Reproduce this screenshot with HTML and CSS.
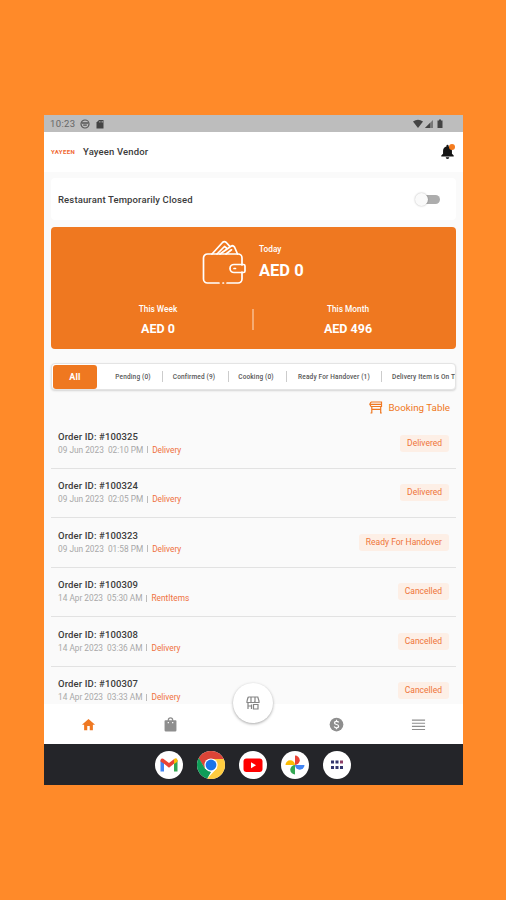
FILE: index.html
```html
<!DOCTYPE html>
<html lang="en">
<head>
  <meta charset="UTF-8">
  <meta name="viewport" content="width=device-width, initial-scale=1.0">
  <title>Yayeen Vendor</title>
  <link rel="stylesheet" href="styles.css">
</head>
<body>
  <div class="device">
    <div class="status-bar">
      <span class="time">10:23</span>
      <svg class="status-face" viewBox="0 0 10 10"><circle cx="5" cy="5" r="4" fill="none" stroke="#555" stroke-width="1.2"/><path d="M2 4h6M3.2 6.2h3.6" stroke="#555" stroke-width="1.3"/></svg>
      <svg class="status-card" viewBox="0 0 8 10"><path d="M3 1h4.5v8.5h-7V3.5z" fill="#444"/><path d="M3.4 2v1.6M5 2v1.6M6.5 2v1.6" stroke="#bdbdbd" stroke-width=".6"/></svg>
      <svg class="status-right" viewBox="0 0 32 10"><path d="M0 2.6Q5-1.2 10 2.6L5 9z" fill="#444"/><path d="M12 9l8-8v8z" fill="#777"/><path d="M12 9l5-5v5z" fill="#444"/><path d="M24.500 1.500h1.500V.5h2v1h1.500V9h-5z" fill="#444"/></svg>
    </div>

    <header class="app-bar">
      <span class="logo">YAYEEN</span>
      <h1>Yayeen Vendor</h1>
      <div class="bell">
        <svg viewBox="0 0 16 18"><path d="M8 17a2 2 0 0 0 2-2H6a2 2 0 0 0 2 2zM13 11V7.500C13 5 11.500 3.200 9.200 2.700V2a1.200 1.200 0 0 0-2.400 0v.7C4.500 3.200 3 5 3 7.500V11l-2 2v1h14v-1z" fill="#151515"/></svg>
        <span class="bell-dot"></span>
      </div>
    </header>

    <main>
      <section class="closed-card">
        <span>Restaurant Temporarily Closed</span>
        <span class="switch"><span class="knob"></span></span>
      </section>

      <section class="earnings">
        <div class="today">
          <svg class="wallet" viewBox="0 0 44 45" fill="none" stroke="#fff" stroke-width="1.700" stroke-linecap="round" stroke-linejoin="round">
            <path d="M17 43H5.500a4 4 0 0 1-4-4V18a4 4 0 0 1 4-4H36a4 4 0 0 1 4 4v7M40 32v7a4 4 0 0 1-4 4H25M21 43h.5"/>
            <path d="M41.500 24.500H32a4 4 0 0 0 0 8H41.500q1.500 0 1.500-1.500V26q0-1.500-1.500-1.500zM32 28.500h1.500"/>
            <path d="M10 14L20.500 2.500q1.800-1.600 3.800 0l3.500 3.800M15 14l7.500-7.500 2.500 2M18 14l11-7.800q2-1.200 3.500.8L35.500 14M24 14l5.500-4.200"/>
          </svg>
          <div class="today-text">
            <span class="label">Today</span>
            <span class="amount amount-lg">AED 0</span>
          </div>
        </div>
        <div class="periods">
          <div class="period">
            <span class="label">This Week</span>
            <span class="amount">AED 0</span>
          </div>
          <div class="split"></div>
          <div class="period">
            <span class="label">This Month</span>
            <span class="amount">AED 496</span>
          </div>
        </div>
      </section>

      <nav class="tabs">
        <span class="tab active">All</span>
        <span class="tab t-pending">Pending (0)</span>
        <span class="tab t-confirmed">Confirmed (9)</span>
        <span class="tab t-cooking">Cooking (0)</span>
        <span class="tab t-ready">Ready For Handover (1)</span>
        <span class="tab t-way">Delivery Item Is On The Way</span>
      </nav>

      <div class="booking">
        <svg viewBox="0 0 14 13" fill="none" stroke="#ef7822" stroke-width="1.200"><path d="M2 1h10.500v4.500H2L.8 3.300 2 1M1.500 3.300h11M2.800 5.500V12M11.700 5.500V12M2.800 8.300h8.900M1.500 12h1.800M11 12h1.800"/></svg>
        <span>Booking Table</span>
      </div>

      <ul class="orders">
        <li class="order">
          <div>
            <p class="order-id">Order ID: #100325</p>
            <p class="order-meta"><span class="date">09 Jun 2023&nbsp; 02:10 PM</span><i></i><b>Delivery</b></p>
          </div>
          <span class="badge">Delivered</span>
        </li>
        <li class="order">
          <div>
            <p class="order-id">Order ID: #100324</p>
            <p class="order-meta"><span class="date">09 Jun 2023&nbsp; 02:05 PM</span><i></i><b>Delivery</b></p>
          </div>
          <span class="badge">Delivered</span>
        </li>
        <li class="order">
          <div>
            <p class="order-id">Order ID: #100323</p>
            <p class="order-meta"><span class="date">09 Jun 2023&nbsp; 01:58 PM</span><i></i><b>Delivery</b></p>
          </div>
          <span class="badge">Ready For Handover</span>
        </li>
        <li class="order">
          <div>
            <p class="order-id">Order ID: #100309</p>
            <p class="order-meta"><span class="date">14 Apr 2023&nbsp; 05:30 AM</span><i></i><b>RentItems</b></p>
          </div>
          <span class="badge">Cancelled</span>
        </li>
        <li class="order">
          <div>
            <p class="order-id">Order ID: #100308</p>
            <p class="order-meta"><span class="date">14 Apr 2023&nbsp; 03:36 AM</span><i></i><b>Delivery</b></p>
          </div>
          <span class="badge">Cancelled</span>
        </li>
        <li class="order">
          <div>
            <p class="order-id">Order ID: #100307</p>
            <p class="order-meta"><span class="date">14 Apr 2023&nbsp; 03:33 AM</span><i></i><b>Delivery</b></p>
          </div>
          <span class="badge">Cancelled</span>
        </li>
      </ul>
    </main>

    <nav class="bottom-nav">
      <span class="nav-item"><svg viewBox="0 0 24 24" fill="#ef7822"><path d="M10 21v-6.500h4V21h5v-8.500h3.500L12 3 1.500 12.500H5V21z"/></svg></span>
      <span class="nav-item"><svg viewBox="0 0 24 24" fill="#8e8e8e"><path fill-rule="evenodd" d="M20 5h-3.500a4.500 4.500 0 0 0-9 0H4a1.500 1.500 0 0 0-1.500 1.500V21A2 2 0 0 0 4.500 23h15a2 2 0 0 0 2-2V6.500A1.500 1.500 0 0 0 20 5zM12 2.500A2.500 2.500 0 0 1 14.500 5h-5A2.500 2.500 0 0 1 12 2.500zM7.500 8h2v2h-2zM14.500 8h2v2h-2z"/></svg></span>
      <span class="nav-item"></span>
      <span class="nav-item"><svg viewBox="0 0 24 24" fill="#8e8e8e"><path d="M12 1a11 11 0 1 0 0 22 11 11 0 0 0 0-22z"/><path d="M15.500 8.500Q14.500 6.800 12 6.800q-3.200 0-3.200 2.400T12 12t3.300 2.700-3.300 2.500q-2.600 0-3.600-1.900M12 4.500v2.500M12 17v2.500" fill="none" stroke="#fff" stroke-width="2"/></svg></span>
      <span class="nav-item"><svg viewBox="0 0 24 24" fill="none" stroke="#8e8e8e" stroke-width="1.800"><path d="M1.500 5h21M1.500 10h21M1.500 15h21M1.500 20h21"/></svg></span>
      <div class="fab">
        <svg viewBox="0 0 14 14" fill="none" stroke="#858585" stroke-width="1.200"><path d="M2.200 1h9.600L13 5v1.500H8.800V5M1 5l1.200-4M1 5v1.500h4V5M5 1v5.500h4V1M2 6.500V13M2 10h3.500M5.500 13V8.500M7.500 8.500h4.500V13H7.500z"/></svg>
      </div>
    </nav>

    <div class="dock">
      <span class="app"><svg viewBox="0 0 28 28"><path d="M5.500 20.500V9l3.500 2.200v9.300z" fill="#4285f4"/><path d="M22.500 20.500V9L19 11.200v9.300z" fill="#34a853"/><path d="M5.500 9.700q0-3 2.800-2L14 12l5.200-4v4.600L14 16.800l-5.200-4.200L5.500 10.500z" fill="#ea4335"/><path d="M19 8q3-2 3.500 1.200v1.500L19 13z" fill="#fbbc04"/></svg></span>
      <span class="app"><svg viewBox="0 0 28 28"><path d="M0 0h28v8H14L8 17.500 0 5z" fill="#db4437"/><path d="M1.500 6.500L8 17.500l6 3.500-4 7H0V6z" fill="#0f9d58"/><path d="M14 8h14v20H10l10-11z" fill="#ffcd40"/><circle cx="14" cy="14" r="6.600" fill="#fff"/><circle cx="14" cy="14" r="5.400" fill="#1a73e8"/></svg></span>
      <span class="app"><svg viewBox="0 0 28 28"><rect x="4.500" y="7.500" width="19" height="13.500" rx="3" fill="#f00"/><path d="M12 11.300v6l5-3z" fill="#fff"/></svg></span>
      <span class="app"><svg viewBox="0 0 28 28"><path d="M14 14V4.500a4.700 4.700 0 0 1 0 9.500z" fill="#ea4335"/><path d="M14 14h9.500a4.700 4.700 0 0 1-9.500 0z" fill="#4285f4"/><path d="M14 14v9.500a4.700 4.700 0 0 1 0-9.500z" fill="#34a853"/><path d="M14 14H4.500a4.700 4.700 0 0 1 9.500 0z" fill="#fbbc04"/></svg></span>
      <span class="app"><svg viewBox="0 0 28 28" fill="#33366e"><path d="M8 9.500h3v3H8zM12.500 9.500h3v3h-3zM8 15h3v3H8zM12.500 15h3v3h-3zM17 15h3v3h-3z"/><path d="M17 9.500h3v3h-3z" fill="#8d3f68"/></svg></span>
    </div>
  </div>
</body>
</html>
```
FILE: styles.css
```css
* {
  box-sizing: border-box;
}
body {
  margin: 0;
  height: 900px;
  padding: 115px 43px 0 44px;
  overflow: hidden;
  background-color: #ff8a29;
  font-family: Roboto, "Liberation Sans", sans-serif;
  color: #3c3c3c;
}
svg {
  display: block;
}
.device {
  display: flex;
  flex-direction: column;
  height: 670px;
  background-color: #fafafa;
}

/* status bar */
.status-bar {
  display: flex;
  align-items: center;
  height: 17px;
  padding: 0 18px 0 6px;
  background-color: #bdbdbd;
}
.time {
  width: 30px;
  font-size: 9.5px;
  color: #666;
  letter-spacing: 0.35px;
}
.status-face {
  width: 10px;
  height: 10px;
}
.status-card {
  width: 8px;
  height: 10px;
  margin-left: 6px;
}
.status-right {
  width: 32px;
  height: 10px;
  margin-left: auto;
}

/* app bar */
.app-bar {
  display: flex;
  align-items: center;
  height: 40px;
  padding: 0 8px 1px 7px;
  background-color: #fff;
}
.logo {
  width: 32px;
  font-size: 6px;
  font-weight: 700;
  letter-spacing: 0.4px;
  color: #f0662f;
}
.app-bar h1 {
  margin: 0;
  font-size: 9.5px;
  font-weight: 500;
  letter-spacing: 0.15px;
}
.bell {
  position: relative;
  margin-left: auto;
}
.bell svg {
  width: 15px;
  height: 16px;
}
.bell-dot {
  position: absolute;
  top: 0;
  right: 0;
  width: 6px;
  height: 6px;
  border-radius: 50%;
  background-color: #f57c1f;
}

main {
  flex: none;
  height: 532px;
  padding: 6px 7px 0;
  overflow: hidden;
}
.closed-card {
  display: flex;
  align-items: center;
  justify-content: space-between;
  height: 42px;
  padding: 0 16px 0 7px;
  border-radius: 4px;
  background-color: #fff;
  font-size: 9.5px;
  font-weight: 500;
  letter-spacing: 0.14px;
}
.switch {
  display: flex;
  align-items: center;
  width: 21px;
  height: 9px;
  border-radius: 5px;
  background-color: #adadad;
}
.knob {
  flex: none;
  width: 13px;
  height: 13px;
  margin-left: -4px;
  border-radius: 50%;
  background-color: #fafafa;
  box-shadow: 0 0 2px rgba(0, 0, 0, 0.3);
}

/* earnings */
.earnings {
  height: 122px;
  margin-top: 7px;
  padding-top: 13px;
  border-radius: 4px;
  background-color: #ef7820;
  color: #fff;
}
.today {
  display: flex;
  height: 45px;
  padding-left: 151px;
}
.wallet {
  width: 44px;
  height: 45px;
}
.today-text {
  display: flex;
  flex-direction: column;
  margin-left: 13px;
  padding-top: 3px;
}
.label {
  font-size: 8.3px;
  line-height: 12px;
  font-weight: 500;
}
.amount {
  font-size: 12.5px;
  line-height: 16px;
  font-weight: 700;
}
.amount-lg {
  margin-top: 6px;
  font-size: 16.5px;
  line-height: 20px;
}
.periods {
  display: flex;
  align-items: center;
  padding: 18px 14px 0 13px;
}
.period {
  display: flex;
  flex: 1;
  flex-direction: column;
  align-items: center;
  gap: 6px;
}
.split {
  width: 2px;
  height: 21px;
  margin-top: -1px;
  background-color: #f6ab73;
}

/* order filter */
.tabs {
  display: flex;
  align-items: center;
  height: 27px;
  margin-top: 14px;
  padding: 1px;
  overflow: hidden;
  border: 1px solid #e4e4e4;
  border-radius: 4px;
  background-color: #fff;
  box-shadow: 0 1px 2px rgba(0, 0, 0, 0.15);
}
.tab {
  flex: none;
  height: 11px;
  border-left: 1px solid #ccc;
  font-size: 6.5px;
  line-height: 12px;
  font-weight: 500;
  letter-spacing: 0.15px;
  text-align: center;
  white-space: nowrap;
  color: #555;
}
.tab.active {
  width: 44px;
  height: 24px;
  margin-right: 3px;
  border: 0;
  border-radius: 3px;
  background-color: #ef7820;
  font-size: 9px;
  line-height: 25px;
  font-weight: 700;
  color: #fff;
}
.t-pending {
  width: 62px;
  padding-left: 3px;
  border-color: transparent;
}
.t-confirmed {
  width: 66px;
  padding-right: 3px;
}
.t-cooking {
  width: 58px;
  padding-right: 3px;
}
.t-ready {
  width: 95px;
}
.t-way {
  padding-left: 10px;
}

.booking {
  display: flex;
  align-items: center;
  justify-content: flex-end;
  gap: 6px;
  height: 29px;
  padding: 6px 6px 0 0;
  font-size: 9.8px;
  color: #ef7822;
}
.booking svg {
  width: 14px;
  height: 13px;
}

/* orders */
.orders {
  margin: 0;
  padding: 0;
  list-style: none;
}
.order {
  display: flex;
  align-items: center;
  justify-content: space-between;
  height: 49.5px;
  padding: 0 7px;
  border-bottom: 1px solid #e2e2e2;
}
.order p {
  margin: 0;
}
.order-id {
  font-size: 9.5px;
  line-height: 13px;
  font-weight: 500;
  letter-spacing: 0.13px;
}
.order-meta {
  display: flex;
  align-items: center;
  font-size: 8.3px;
  line-height: 14px;
  color: #a8a8a8;
}
.order-meta i {
  width: 1px;
  height: 7px;
  margin: 0 4px;
  background-color: #bbb;
}
.order-meta b {
  font-weight: 400;
  color: #ef7040;
}
.badge {
  height: 17px;
  padding: 0 7px;
  border-radius: 3px;
  background-color: #fdefe6;
  font-size: 8.5px;
  line-height: 17px;
  color: #ef7438;
}

/* bottom nav */
.bottom-nav {
  position: relative;
  display: flex;
  align-items: center;
  flex: none;
  height: 40px;
  padding: 0 3px;
  background-color: #fff;
}
.nav-item {
  display: flex;
  flex: 1;
  justify-content: center;
}
.nav-item svg {
  width: 15px;
  height: 15px;
}
.fab {
  position: absolute;
  top: -21px;
  left: 189px;
  display: flex;
  align-items: center;
  justify-content: center;
  width: 40px;
  height: 40px;
  border-radius: 50%;
  background-color: #fff;
  box-shadow: 0 1px 3px rgba(0, 0, 0, 0.35);
}
.fab svg {
  width: 14px;
  height: 14px;
}

/* launcher dock */
.dock {
  display: flex;
  align-items: center;
  justify-content: center;
  gap: 14px;
  height: 41px;
  padding-right: 1px;
  background-color: #242529;
}
.app {
  width: 28px;
  height: 28px;
  overflow: hidden;
  border-radius: 50%;
  background-color: #fff;
}
```
